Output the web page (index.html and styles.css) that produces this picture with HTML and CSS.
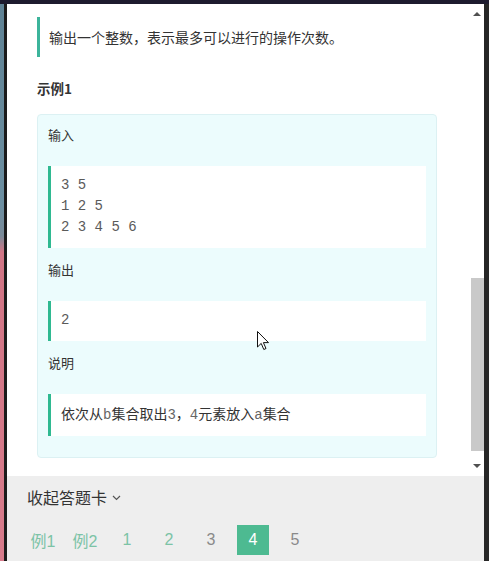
FILE: index.html
```html
<!DOCTYPE html>
<html lang="zh">
<head>
<meta charset="utf-8">
<link rel="stylesheet" href="styles.css">
</head>
<body>
<div class="frame">
  <div class="topbar"></div>
  <div class="main">
    <div class="leftstrip"></div>
    <div class="leftline"></div>
    <div class="panel">
      <div class="scrollarea">
        <div class="content">
          <blockquote class="quote">输出一个整数，表示最多可以进行的操作次数。</blockquote>
          <h3 class="ex-title">示例1</h3>
          <div class="ex-box">
            <div class="label">输入</div>
            <pre class="code">3 5
1 2 5
2 3 4 5 6</pre>
            <div class="label">输出</div>
            <pre class="code">2</pre>
            <div class="label">说明</div>
            <div class="code note">依次从<span class="mono">b</span>集合取出<span class="mono">3</span>，<span class="mono">4</span>元素放入<span class="mono">a</span>集合</div>
          </div>
        </div>
        <div class="scrollbar">
          <div class="arrow up"></div>
          <div class="track"><div class="thumb"></div></div>
          <div class="arrow down"></div>
        </div>
        <svg class="cursor" width="13" height="20" viewBox="0 0 13 20">
          <path d="M0.5 0.5 L0.5 16 L4.2 12.4 L6.8 18.5 L9 17.5 L6.4 11.6 L11.5 11.6 Z" fill="#fff" stroke="#111" stroke-width="1" stroke-linejoin="miter"/>
        </svg>
      </div>
      <div class="bottombar">
        <div class="collapse">收起答题卡<svg class="chev" width="9" height="6" viewBox="0 0 9 6"><path d="M1 1 L4.5 4.5 L8 1" fill="none" stroke="#555" stroke-width="1.2"/></svg></div>
        <div class="pager">
          <span class="pg done">例1</span>
          <span class="pg done">例2</span>
          <span class="pg done">1</span>
          <span class="pg done">2</span>
          <span class="pg">3</span>
          <span class="pg active">4</span>
          <span class="pg">5</span>
        </div>
      </div>
    </div>
    <div class="rightstrip"></div>
  </div>
</div>
</body>
</html>
```

FILE: styles.css
```css
* { box-sizing: border-box; }
html, body {
  margin: 0;
  padding: 0;
  width: 489px;
  height: 561px;
  overflow: hidden;
  font-family: "Noto Sans CJK SC", "Liberation Sans", sans-serif;
  color: #333;
}
.frame {
  width: 489px;
  height: 561px;
  display: flex;
  flex-direction: column;
}
.topbar {
  height: 4px;
  background: #1d1b2e;
  flex: none;
}
.main {
  flex: 1;
  display: flex;
  min-height: 0;
}
.leftstrip {
  width: 4px;
  background: linear-gradient(#5f8294 0, #6c8fa1 200px, #7a8a98 232px, #d07585 248px, #d77b8b 100%);
}
.leftline {
  width: 3px;
  background: #1b1b1b;
}
.rightstrip {
  width: 5px;
  background: #262626;
}
.panel {
  flex: 1;
  display: flex;
  flex-direction: column;
  background: #fff;
  min-width: 0;
}
.scrollarea {
  position: relative;
  height: 472px;
  display: flex;
  overflow: hidden;
}
.content {
  flex: 1;
  padding: 13px 0 0 30px;
  min-width: 0;
}
.quote {
  margin: 0;
  border-left: 3px solid #3cb49b;
  padding: 10px 0 10px 9px;
  font-size: 14px;
  line-height: 20px;
  color: #333;
}
.ex-title {
  margin: 21px 0 0;
  font-size: 13.5px;
  line-height: 20px;
  font-weight: bold;
  color: #333;
}
.ex-box {
  margin-top: 16px;
  width: 400px;
  background: #ecfcfd;
  border: 1px solid #dcf1f3;
  border-radius: 4px;
  padding: 10px 10px 21px;
}
.label {
  font-size: 13px;
  line-height: 20px;
  color: #333;
  margin-top: 12px;
}
.label:first-child { margin-top: 0; }
.code {
  margin: 21px 0 0;
  background: #fff;
  border-left: 3px solid #2fb991;
  padding: 9px 10px 10px;
  font-family: "Liberation Mono", "Noto Sans CJK SC", monospace;
  font-size: 14px;
  line-height: 21px;
  color: #5a5a5a;
  white-space: pre;
}
.code.note {
  font-family: "Noto Sans CJK SC", sans-serif;
  font-size: 14px;
  white-space: normal;
  color: #333;
}
.mono {
  font-family: "Liberation Mono", monospace;
  font-size: 14px;
  color: #666;
}
.scrollbar {
  width: 14px;
  flex: none;
  display: flex;
  flex-direction: column;
  align-items: center;
}
.arrow {
  width: 0;
  height: 0;
  border-left: 4px solid transparent;
  border-right: 4px solid transparent;
}
.arrow.up {
  border-bottom: 4px solid #505050;
  margin-top: 8px;
}
.arrow.down {
  border-top: 4px solid #505050;
  margin-bottom: 8px;
}
.track {
  flex: 1;
  width: 13px;
  display: flex;
  flex-direction: column;
  justify-content: flex-end;
  padding-bottom: 13px;
}
.thumb {
  height: 173px;
  background: #c9c9c9;
}
.cursor {
  position: absolute;
  left: 250px;
  top: 327px;
}
.bottombar {
  flex: 1;
  background: #eeeeee;
  padding: 9px 0 0 20px;
}
.collapse {
  font-size: 16px;
  line-height: 24px;
  color: #333;
  display: flex;
  align-items: center;
}
.chev { margin-left: 5px; margin-top: 2px; }
.pager {
  margin-top: 16px;
  display: flex;
  gap: 10px;
}
.pg {
  width: 32px;
  height: 30px;
  display: flex;
  align-items: center;
  justify-content: center;
  font-family: "Liberation Sans", "Noto Sans CJK SC", sans-serif;
  font-size: 16px;
  color: #8a8a8a;
  white-space: nowrap;
}
.pg.done { color: #7cc3a6; }
.pg.active {
  background: #4dba91;
  color: #fff;
}
```
